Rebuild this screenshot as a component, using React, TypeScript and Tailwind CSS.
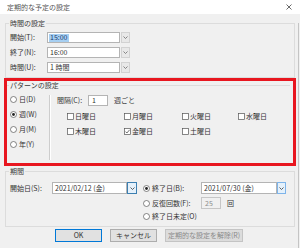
import React from "react"

const font = "font-['Noto_Sans_CJK_JP','Noto_Sans',sans-serif]"

function Chevron({ color = "#6a6a6a" }: { color?: string }) {
  return (
    <svg width="5" height="3" viewBox="0 0 5 3">
      <path d="M0.5 0.5 L2.5 2.5 L4.5 0.5" fill="none" stroke={color} strokeWidth="0.8" />
    </svg>
  )
}

function Radio({ checked = false }: { checked?: boolean }) {
  return (
    <svg width="7" height="7" viewBox="0 0 7 7" className="shrink-0">
      <circle cx="3.5" cy="3.5" r="3" fill="white" stroke="#555" strokeWidth="0.7" />
      {checked && <circle cx="3.5" cy="3.5" r="1.4" fill="#222" />}
    </svg>
  )
}

function Check({ checked = false }: { checked?: boolean }) {
  return (
    <svg width="7" height="7" viewBox="0 0 7 7" className="shrink-0">
      <rect x="0.5" y="0.5" width="6" height="6" fill="white" stroke="#555" strokeWidth="0.7" />
      {checked && <path d="M1.5 3.6 L2.9 5 L5.6 1.8" fill="none" stroke="#333" strokeWidth="0.7" />}
    </svg>
  )
}

function GroupLabel({ children }: { children: React.ReactNode }) {
  return (
    <div className="-mt-[4px] ml-[3px] w-fit h-[7px] px-[1px] bg-[#f0f0f0] text-[#3a3a3a] flex items-center">
      {children}
    </div>
  )
}

const timeRows = [
  { label: "開始(T):", value: "15:00", selected: true },
  { label: "終了(N):", value: "16:00" },
  { label: "時間(U):", value: "1 時間" },
]

const weekdays = [
  ["日曜日", "月曜日", "火曜日", "水曜日"],
  ["木曜日", "金曜日", "土曜日"],
]

export default function App() {
  return (
    <div className={`w-[300px] h-[248px] bg-[#f0f0f0] overflow-hidden text-[7px] leading-none text-[#333] ${font}`}>
      {/* title bar */}
      <div className="h-[14px] bg-white flex items-center justify-between pl-[7px] pr-[8px]">
        <span className="text-[#555]">定期的な予定の設定</span>
        <svg width="6" height="6" viewBox="0 0 6 6">
          <path d="M0.5 0.5 L5.5 5.5 M5.5 0.5 L0.5 5.5" stroke="#444" strokeWidth="0.8" />
        </svg>
      </div>

      <div className="w-[299px] h-[234px] border-r border-[#c4c4c4] pl-[5px] pr-[4px]">
        {/* 時間の設定 */}
        <div className="mt-[9px] h-[55px] w-[290px] border border-[#dcdcdc]">
          <GroupLabel>時間の設定</GroupLabel>
          <div className="mt-[5px] pl-[4px] flex flex-col gap-[4px]">
            {timeRows.map((r) => (
              <div key={r.label} className="h-[11px] flex items-center">
                <span className="w-[37px]">{r.label}</span>
                <div className="w-[73px] h-full bg-white border border-[#b4b4b4] flex items-center pl-[1px]">
                  <span
                    className={
                      r.selected ? "h-[8px] px-[1px] flex items-center bg-[#a6cff2] text-[#1a3a70]" : "px-[1px]"
                    }
                  >
                    {r.value}
                  </span>
                </div>
                <div className="ml-[1px] w-[9px] h-full bg-[#e8e8e8] border border-[#d2d2d2] flex items-center justify-center">
                  <Chevron />
                </div>
              </div>
            ))}
          </div>
        </div>

        {/* パターンの設定 (highlighted) */}
        <div className="-ml-[1px] w-[292px] h-[88px] border-[3px] border-[#e8161f]">
          <div className="mt-[4px] mr-[3px] border-t border-[#dcdcdc]">
            <div className="-mt-[4px] ml-[2px] w-fit h-[7px] px-[1px] bg-[#f0f0f0] text-[#3a3a3a] flex items-center">
              パターンの設定
            </div>
            <div className="mt-[6px] h-[65px] flex">
              <div className="w-[42px] pl-[3px] flex flex-col gap-[6px]">
                {[
                  ["日(D)", false],
                  ["週(W)", true],
                  ["月(M)", false],
                  ["年(Y)", false],
                ].map(([t, c]) => (
                  <div key={t as string} className="h-[9px] flex items-center gap-[2px]">
                    <Radio checked={c as boolean} />
                    <span>{t}</span>
                  </div>
                ))}
              </div>
              <div className="w-[2px] h-full border-l border-[#cdcdcd] border-r border-r-white" />
              <div className="pl-[6px]">
                <div className="h-[11px] flex items-center">
                  <span className="w-[31px]">間隔(C):</span>
                  <div className="w-[20px] h-full bg-white border border-[#b4b4b4] flex items-center pl-[3px]">1</div>
                  <span className="ml-[6px]">週ごと</span>
                </div>
                <div className="mt-[6px] pl-[10px] flex flex-col gap-[6px]">
                  {weekdays.map((row, i) => (
                    <div key={i} className="h-[9px] grid grid-cols-[57px_58px_56px_50px]">
                      {row.map((d) => (
                        <div key={d} className="flex items-center gap-[1px]">
                          <Check checked={d === "金曜日"} />
                          <span>{d}</span>
                        </div>
                      ))}
                    </div>
                  ))}
                </div>
              </div>
            </div>
          </div>
        </div>

        {/* 期間 */}
        <div className="mt-[5px] h-[56px] w-[290px] border border-[#dcdcdc]">
          <GroupLabel>期間</GroupLabel>
          <div className="mt-[7px] pl-[4px] flex">
            <div className="h-[12px] flex items-center">
              <span className="w-[42px]">開始日(S):</span>
              <div className="w-[75px] h-full bg-white border border-[#b4b4b4] flex items-center pl-[2px]">
                2021/02/12 (金)
              </div>
              <div className="w-[10px] h-full bg-[#e5f1fb] border border-[#3c7fb1] flex items-center justify-center">
                <Chevron color="#3a3a3a" />
              </div>
            </div>
            <div className="ml-[6px] flex flex-col">
              <div className="h-[12px] flex items-center">
                <Radio checked />
                <span className="ml-[2px] w-[49px]">終了日(B):</span>
                <div className="w-[76px] h-full bg-white border border-[#b4b4b4] flex items-center pl-[2px]">
                  2021/07/30 (金)
                </div>
                <div className="w-[9px] h-full bg-[#e5f1fb] border border-[#7eb4ea] flex items-center justify-center">
                  <Chevron color="#3a3a3a" />
                </div>
              </div>
              <div className="mt-[3px] h-[12px] flex items-center">
                <Radio />
                <span className="ml-[2px] w-[49px]">反復回数(F):</span>
                <div className="w-[20px] h-full bg-[#f0f0f0] border border-[#c6c6c6] flex items-center pl-[3px] text-[#8c8c8c]">
                  25
                </div>
                <span className="ml-[6px]">回</span>
              </div>
              <div className="mt-[3px] h-[9px] flex items-center">
                <Radio />
                <span className="ml-[2px]">終了日未定(O)</span>
              </div>
            </div>
          </div>
        </div>

        {/* buttons */}
        <div className="mt-[2px] ml-[50px] flex gap-[8px]">
          <button className="w-[47px] h-[13px] bg-[#e1e1e1] border border-[#0078d7] flex items-center justify-center">
            OK
          </button>
          <button className="w-[47px] h-[13px] bg-[#e1e1e1] border border-[#adadad] flex items-center justify-center">
            キャンセル
          </button>
          <button className="w-[78px] h-[13px] bg-[#dcdcdc] border border-[#c4c4c4] text-[#8a8a8a] flex items-center justify-center">
            定期的な設定を解除(R)
          </button>
        </div>
      </div>
    </div>
  )
}
